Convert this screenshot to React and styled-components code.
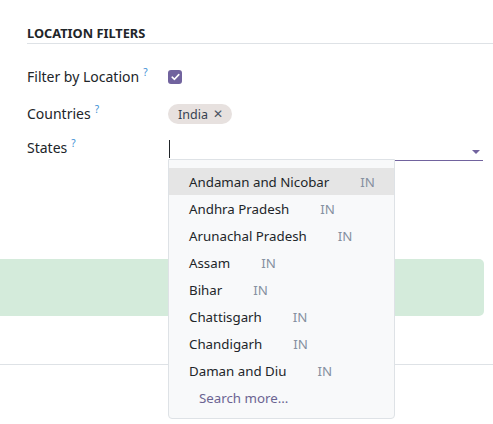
import React from "react";
import styled, { createGlobalStyle } from "styled-components";

const Global = createGlobalStyle`
  html, body { margin: 0; padding: 0; background: #fff; }
  body {
    font-family: "Noto Sans", "Open Sans", sans-serif;
    font-size: 13px;
    color: #212529;
    overflow: hidden;
  }
`;

const Page = styled.div`
  width: 493px;
  height: 424px;
  position: relative;
`;

const Section = styled.section`
  padding: 25px 0 0 27px;
`;

const Title = styled.h3`
  margin: 0;
  font-size: 12.8px;
  line-height: 16px;
  font-weight: 700;
  text-transform: uppercase;
  color: #212529;
  padding-bottom: 2px;
  border-bottom: 1px solid #dee2e6;
`;

const Rows = styled.div`
  padding-top: 21px;
  display: flex;
  flex-direction: column;
`;

const Row = styled.div`
  display: grid;
  grid-template-columns: 141px 1fr;
  align-items: ${(p) => p.align || "center"};
  height: 24px;
  margin-top: ${(p) => p.mt || 0}px;
`;

const Label = styled.label`
  font-size: 14px;
  line-height: 20px;
  color: #212529;
  white-space: nowrap;
`;

const Help = styled.sup`
  color: #3b8fd4;
  font-size: 10px;
  margin-left: 4px;
  vertical-align: 6px;
  line-height: 0;
`;

const Check = styled.span`
  width: 14px;
  height: 14px;
  border-radius: 3px;
  background: #71639e;
  display: inline-flex;
  align-items: center;
  justify-content: center;
`;

const Tag = styled.span`
  display: inline-flex;
  align-items: center;
  gap: 5px;
  height: 20px;
  padding: 0 9px 0 10px;
  border-radius: 10px;
  background: #e7e1df;
  color: #374151;
  font-size: 12.5px;
  justify-self: start;
`;

const Remove = styled.span`
  font-size: 12px;
  color: #4b5563;
  line-height: 1;
`;

const Field = styled.div`
  position: relative;
  width: 315px;
  height: 20px;
  border-bottom: 1px solid #71639e;
  margin-top: 2px;
`;

const Caret = styled.span`
  position: absolute;
  top: 10px;
  left: 304px;
  width: 0;
  height: 0;
  border-left: 4px solid transparent;
  border-right: 4px solid transparent;
  border-top: 4px solid #71639e;
`;

const Cursor = styled.span`
  position: absolute;
  left: 1px;
  top: 0;
  width: 1px;
  height: 18px;
  background: #212529;
`;

const Menu = styled.ul`
  position: absolute;
  top: 19px;
  left: 0;
  width: 225px;
  margin: 0;
  padding: 8px 0 7px;
  list-style: none;
  background: #f8f9fa;
  border: 1px solid #dee2e6;
  border-radius: 0 0 4px 4px;
  z-index: 2;
`;

const Item = styled.li`
  height: 27px;
  display: flex;
  align-items: center;
  padding-left: ${(p) => (p.more ? 30 : 20)}px;
  background: ${(p) => (p.active ? "#e5e5e5" : "transparent")};
  font-size: 13.3px;
  color: ${(p) => (p.more ? "#6b6492" : "#212529")};
  white-space: nowrap;
`;

const Code = styled.span`
  color: #8590a0;
  margin-left: 31px;
`;

const Notice = styled.div`
  margin-top: 97px;
  width: 484px;
  height: 57px;
  background: #d4ebdb;
  border-radius: 0 5px 5px 0;
`;

const Footer = styled.div`
  margin-top: 48px;
  border-top: 1px solid #dee2e6;
`;

const states = [
  "Andaman and Nicobar",
  "Andhra Pradesh",
  "Arunachal Pradesh",
  "Assam",
  "Bihar",
  "Chattisgarh",
  "Chandigarh",
  "Daman and Diu",
];

export default function App() {
  return (
    <Page>
      <Global />
      <Section>
        <Title>Location Filters</Title>
        <Rows>
          <Row>
            <Label>
              Filter by Location<Help>?</Help>
            </Label>
            <Check>
              <svg width="9" height="8" viewBox="0 0 9 8">
                <path
                  d="M1.2 4.2 L3.5 6.3 L7.8 1.6"
                  fill="none"
                  stroke="#fff"
                  strokeWidth="1.6"
                  strokeLinecap="round"
                  strokeLinejoin="round"
                />
              </svg>
            </Check>
          </Row>
          <Row mt={13}>
            <Label>
              Countries<Help>?</Help>
            </Label>
            <Tag>
              India <Remove>✕</Remove>
            </Tag>
          </Row>
          <Row mt={12} align="start">
            <Label>
              States<Help>?</Help>
            </Label>
            <Field>
              <Cursor />
              <Caret />
              <Menu>
                {states.map((s, i) => (
                  <Item key={s} active={i === 0}>
                    {s}
                    <Code>IN</Code>
                  </Item>
                ))}
                <Item more>Search more...</Item>
              </Menu>
            </Field>
          </Row>
        </Rows>
      </Section>
      <Notice />
      <Footer />
    </Page>
  );
}
